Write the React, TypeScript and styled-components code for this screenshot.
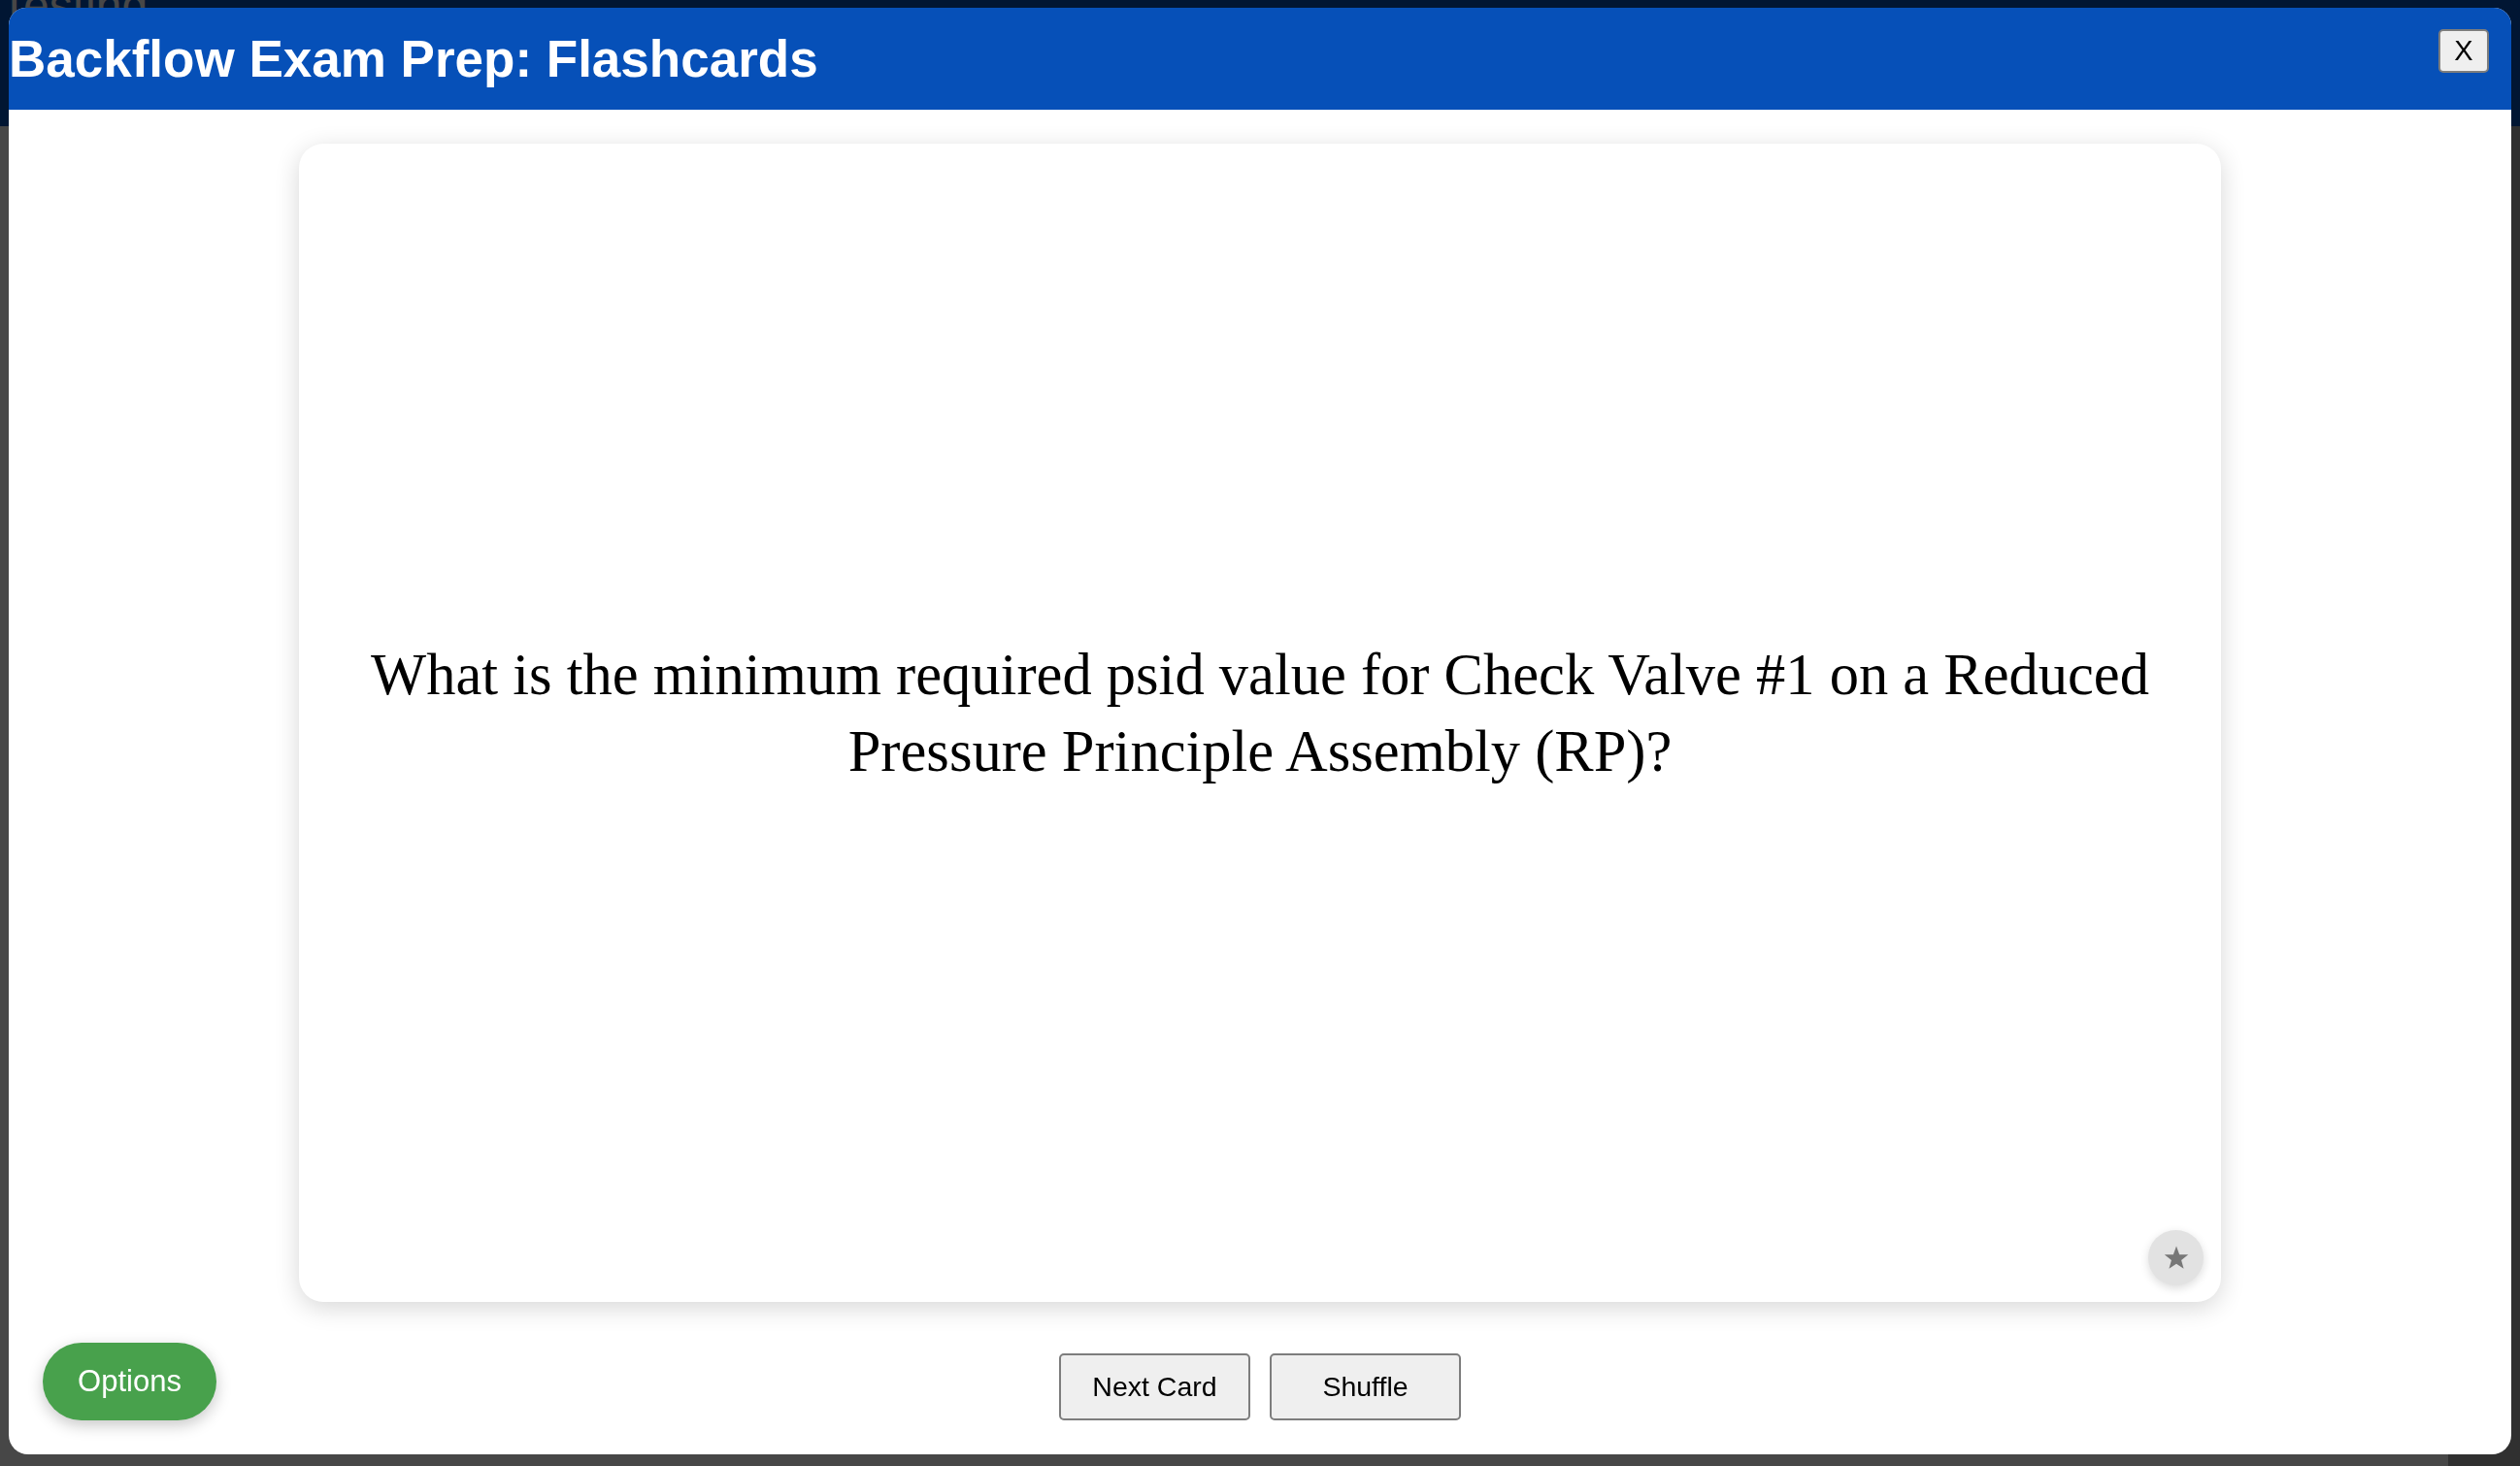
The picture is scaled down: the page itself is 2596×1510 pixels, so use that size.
import React from 'react'
import styled, { createGlobalStyle } from 'styled-components'

const GlobalStyle = createGlobalStyle`
    html, body {
        margin: 0;
        padding: 0;
        overflow: hidden;
    }
    body {
        font-family: 'Liberation Sans', Arial, sans-serif;
        background: #ffffff;
    }
`

const question =
    'What is the minimum required psid value for Check Valve #1 on a Reduced Pressure Principle Assembly (RP)?'

export default function App() {
    return (
        <>
            <GlobalStyle />
            <BackPage>
                <BackHeader>
                    <BackTitle>Testing</BackTitle>
                </BackHeader>
                <BackBody>
                    <BackMain>
                        <BackHeading>1. Relief Valve Operation</BackHeading>
                    </BackMain>
                    <BackAside />
                </BackBody>
            </BackPage>

            <Overlay>
                <Modal>
                    <Header>
                        <Title>Backflow Exam Prep: Flashcards</Title>
                        <CloseButton>X</CloseButton>
                    </Header>
                    <Body>
                        <Card>
                            <Question>{question}</Question>
                            <StarButton aria-label="Favourite">
                                <svg width="26" height="25" viewBox="0 0 24 23">
                                    <polygon
                                        points="12,0.5 14.9,8.4 23.3,8.6 16.7,13.8 19,21.9 12,17.2 5,21.9 7.3,13.8 0.7,8.6 9.1,8.4"
                                        fill="#777777"
                                    />
                                </svg>
                            </StarButton>
                        </Card>
                        <Controls>
                            <ControlButton>Next Card</ControlButton>
                            <ControlButton>Shuffle</ControlButton>
                        </Controls>
                    </Body>
                    <OptionsButton>Options</OptionsButton>
                </Modal>
            </Overlay>
        </>
    )
}

const BackPage = styled.div`
    height: 100vh;
    display: flex;
    flex-direction: column;
`

const BackHeader = styled.header`
    height: 130px;
    flex-shrink: 0;
    background: #0650b8;
    color: #ffffff;
    overflow: hidden;
`

const BackTitle = styled.h1`
    margin: -22px 0 0 0;
    font-size: 48px;
    font-weight: normal;
`

const BackBody = styled.div`
    flex: 1;
    display: grid;
    grid-template-columns: 1fr 74px;
    overflow: hidden;
`

const BackMain = styled.main`
    display: flex;
    flex-direction: column;
    justify-content: flex-end;
    padding-left: 10px;
`

const BackHeading = styled.h2`
    margin: 0 0 -52px 0;
    font-size: 54px;
    color: #0650b8;
`

const BackAside = styled.aside`
    background: #ababab;
`

const Overlay = styled.div`
    position: fixed;
    inset: 0;
    background: rgba(0, 0, 0, 0.72);
    padding: 8px 9px 12px 9px;
    display: flex;
`

const Modal = styled.div`
    position: relative;
    flex: 1;
    display: flex;
    flex-direction: column;
    background: #ffffff;
    border-radius: 18px 18px 20px 20px;
    overflow: hidden;
`

const Header = styled.div`
    height: 105px;
    flex-shrink: 0;
    display: flex;
    justify-content: space-between;
    align-items: flex-start;
    background: #0650b8;
`

const Title = styled.h2`
    margin: 22px 0 0 0;
    font-size: 53px;
    font-weight: bold;
    color: #ffffff;
    line-height: normal;
`

const CloseButton = styled.button`
    margin: 22px 23px 0 0;
    width: 52px;
    height: 45px;
    padding: 0;
    font-family: 'Liberation Sans', Arial, sans-serif;
    font-size: 29px;
    color: #000000;
    background: #efefef;
    border: 2px solid #7d7d7d;
    border-radius: 5px;
`

const Body = styled.div`
    flex: 1;
    display: flex;
    flex-direction: column;
    align-items: center;
    gap: 53px;
    padding: 35px 0;
`

const Card = styled.div`
    position: relative;
    width: 1980px;
    flex: 1;
    box-sizing: border-box;
    display: flex;
    align-items: center;
    justify-content: center;
    padding: 0 45px 22px;
    background: #ffffff;
    border-radius: 25px;
    box-shadow: 0 6px 26px rgba(0, 0, 0, 0.16);
`

const Question = styled.p`
    margin: 0;
    font-family: 'Liberation Serif', 'Times New Roman', serif;
    font-size: 60.5px;
    line-height: 79px;
    text-align: center;
    color: #000000;
`

const StarButton = styled.button`
    position: absolute;
    right: 18px;
    bottom: 17px;
    width: 57px;
    height: 57px;
    padding: 0;
    display: flex;
    align-items: center;
    justify-content: center;
    border: none;
    border-radius: 50%;
    background: #e2e2e2;
    box-shadow: 0 3px 10px rgba(0, 0, 0, 0.14);
`

const Controls = styled.div`
    display: flex;
    gap: 20px;
`

const ControlButton = styled.button`
    width: 197px;
    height: 69px;
    padding: 0;
    font-family: 'Liberation Sans', Arial, sans-serif;
    font-size: 28.5px;
    color: #000000;
    background: #efefef;
    border: 2px solid #7d7d7d;
    border-radius: 5px;
`

const OptionsButton = styled.button`
    position: absolute;
    left: 35px;
    bottom: 35px;
    width: 179px;
    height: 80px;
    padding: 0;
    font-family: 'Liberation Sans', Arial, sans-serif;
    font-size: 31px;
    color: #ffffff;
    background: #48a14c;
    border: none;
    border-radius: 40px;
    box-shadow: 0 5px 16px rgba(0, 0, 0, 0.22);
`
